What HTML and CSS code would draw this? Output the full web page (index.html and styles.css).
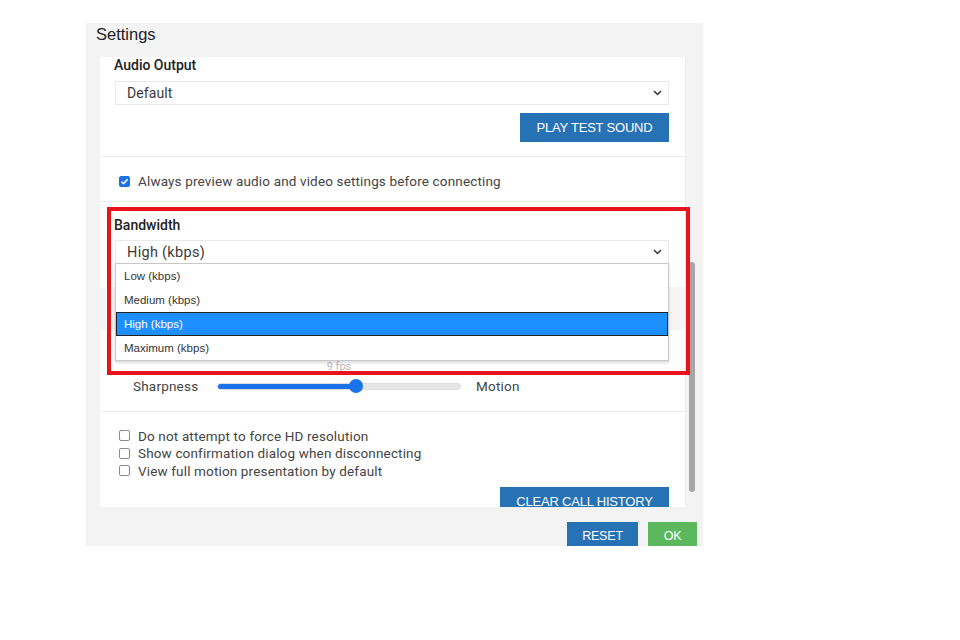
FILE: index.html
```html
<!DOCTYPE html>
<html>
<head>
<meta charset="utf-8">
<link rel="stylesheet" href="styles.css">
</head>
<body>
<div class="dialog">
  <div class="title">Settings</div>
  <div class="main">
    <div class="panel">
      <div class="section s-audio">
        <div class="label">Audio Output</div>
        <div class="select">
          <span>Default</span>
          <svg class="chev" width="9" height="6" viewBox="0 0 9 6"><polyline points="1,1 4.5,4.5 8,1" fill="none" stroke="#333" stroke-width="1.5"/></svg>
        </div>
        <div class="btn-row"><button class="btn blue play">PLAY TEST SOUND</button></div>
      </div>
      <div class="section s-preview">
        <label class="check-row"><span class="cb checked"><svg width="9" height="9" viewBox="0 0 9 9"><polyline points="1.5,4.6 3.6,6.7 7.6,2.2" fill="none" stroke="#fff" stroke-width="1.6"/></svg></span>Always preview audio and video settings before connecting</label>
      </div>
      <div class="section s-bandwidth">
        <div class="label">Bandwidth</div>
        <div class="select-wrap">
          <div class="select big">
            <span>High (kbps)</span>
            <svg class="chev" width="9" height="6" viewBox="0 0 9 6"><polyline points="1,1 4.5,4.5 8,1" fill="none" stroke="#333" stroke-width="1.5"/></svg>
          </div>
          <ul class="options">
            <li>Low (kbps)</li>
            <li>Medium (kbps)</li>
            <li class="sel">High (kbps)</li>
            <li>Maximum (kbps)</li>
          </ul>
        </div>
      </div>
      <div class="band"></div>
      <div class="section s-video">
        <div class="fps">9 fps</div>
        <div class="slider-row">
          <span class="s-left">Sharpness</span>
          <div class="slider">
            <div class="fill"></div>
            <div class="thumb"></div>
          </div>
          <span class="s-right">Motion</span>
        </div>
      </div>
      <div class="section s-misc">
        <label class="check-row sm"><span class="cb"></span>Do not attempt to force HD resolution</label>
        <label class="check-row sm"><span class="cb"></span>Show confirmation dialog when disconnecting</label>
        <label class="check-row sm"><span class="cb"></span>View full motion presentation by default</label>
        <div class="btn-row clear"><button class="btn blue history">CLEAR CALL HISTORY</button></div>
      </div>
    </div>
    <div class="track"><div class="thumb-bar"></div></div>
  </div>
  <div class="footer">
    <button class="btn blue reset">RESET</button>
    <button class="btn green ok">OK</button>
  </div>
  <div class="highlight"></div>
</div>
</body>
</html>
```
FILE: styles.css
```css
* { box-sizing: border-box; }
body {
  margin: 0;
  background: #fff;
  font-family: Roboto, "Liberation Sans", sans-serif;
  color: #333;
}
.dialog {
  position: relative;
  margin: 23px 0 0 86px;
  width: 617px;
  height: 523px;
  background: #f3f3f3;
  overflow: hidden;
  display: flex;
  flex-direction: column;
}
.title {
  height: 34px;
  padding-left: 10px;
  font-family: "Liberation Sans", Arial, sans-serif;
  font-size: 16.5px;
  line-height: 22px;
  color: #222;
  flex: none;
}
.main {
  display: flex;
  height: 450px;
  flex: none;
}
.panel {
  margin-left: 14px;
  width: 586px;
  height: 450px;
  background: #fff;
  overflow: hidden;
  border-right: 1px solid #ececec;
}
.track {
  width: 17px;
  padding-left: 3px;
  padding-top: 205px;
}
.thumb-bar {
  width: 6px;
  height: 230px;
  border-radius: 3px;
  background: #a6a6a6;
}
.section {
  padding: 0 16px 0 15px;
  border-bottom: 1px solid #ebebeb;
}
.label {
  font-size: 14px;
  font-weight: 500;
  color: #222;
  line-height: 16px;
  margin-left: -1px;
}
.select {
  display: flex;
  align-items: center;
  justify-content: space-between;
  height: 24px;
  border: 1px solid #e9e9e9;
  padding: 0 6px 0 11px;
  font-size: 14px;
  color: #3a3a3a;
  background: #fff;
  letter-spacing: 0.1px;
}
.select.big { font-size: 14.5px; letter-spacing: 0.3px; }
.chev { display: block; }
.btn {
  border: none;
  color: #fff;
  font-family: "Liberation Sans", Arial, sans-serif;
  font-size: 13px;
  letter-spacing: -0.2px;
  padding: 0;
  margin: 0;
}
.btn.blue { background: #2672b4; }
.btn.green { background: #5cb85c; }
.btn-row {
  display: flex;
  justify-content: flex-end;
}
.s-audio { padding-bottom: 14px; }
.s-audio .select { margin-top: 8px; }
.s-audio .btn-row { margin-top: 8px; }
.play { width: 149px; height: 29px; }
.check-row {
  display: flex;
  align-items: center;
  height: 16px;
  font-size: 13.5px;
  letter-spacing: 0.15px;
  color: #444;
  padding-left: 4px;
}
.cb {
  width: 11px;
  height: 11px;
  border: 1px solid #8a8a8a;
  border-radius: 2px;
  margin-right: 8px;
  display: flex;
  align-items: center;
  justify-content: center;
  flex: none;
}
.cb.checked {
  background: #1a73e8;
  border-color: #1a73e8;
}
.cb svg { display: block; }
.s-preview { padding-top: 16px; padding-bottom: 12px; }
.s-bandwidth { padding-top: 15px; padding-bottom: 23px; border-bottom: none; }
.s-bandwidth .select-wrap { margin-top: 7px; position: relative; }
.options {
  position: absolute;
  z-index: 5;
  top: 23px;
  left: 0;
  right: 0;
  margin: 0;
  padding: 0;
  list-style: none;
  background: #fff;
  border: 1px solid #c8c8c8;
  box-shadow: 0 2px 3px rgba(0,0,0,0.15);
}
.options li {
  height: 24px;
  line-height: 24px;
  padding-left: 8px;
  font-family: "Liberation Sans", Arial, sans-serif;
  font-size: 11.5px;
  color: #333;
}
.options li.sel {
  background: #1e8fff;
  color: #fff;
  outline: 1px solid #222;
  outline-offset: -1px;
}
.band {
  height: 43px;
  background: #f5f5f5;
}
.s-video { padding-top: 30px; padding-bottom: 15px; }
.fps {
  text-align: center;
  font-size: 11px;
  line-height: 14px;
  color: #bbb;
  width: 448px;
}
.slider-row {
  display: flex;
  align-items: center;
  height: 20px;
  margin-top: 2px;
  padding-left: 18px;
  font-size: 13.5px;
  letter-spacing: 0.2px;
  color: #444;
}
.s-left { width: 84px; }
.slider {
  position: relative;
  width: 244px;
  height: 7px;
  border-radius: 4px;
  background: #e6e6e6;
  border: 1px solid #dcdcdc;
  margin-right: 15px;
}
.slider .fill {
  width: 140px;
  height: 5px;
  border-radius: 3px;
  background: #1a73e8;
}
.slider .thumb {
  position: absolute;
  left: 131px;
  top: -5px;
  width: 14px;
  height: 14px;
  border-radius: 50%;
  background: #1a73e8;
}
.s-misc { padding-top: 15px; border-bottom: none; }
.check-row.sm { height: 17.5px; }
.btn-row.clear { margin-top: 7px; }
.history { width: 169px; height: 29px; }
.footer {
  display: flex;
  justify-content: flex-end;
  gap: 10px;
  padding: 15px 6px 0 0;
}
.footer .btn { font-size: 12.5px; }
.reset { width: 71px; height: 28px; }
.ok { width: 49px; height: 28px; }
.highlight {
  position: absolute;
  left: 21px;
  top: 184px;
  width: 583px;
  height: 168px;
  border: 4px solid #e8141b;
  z-index: 10;
  pointer-events: none;
}
```
